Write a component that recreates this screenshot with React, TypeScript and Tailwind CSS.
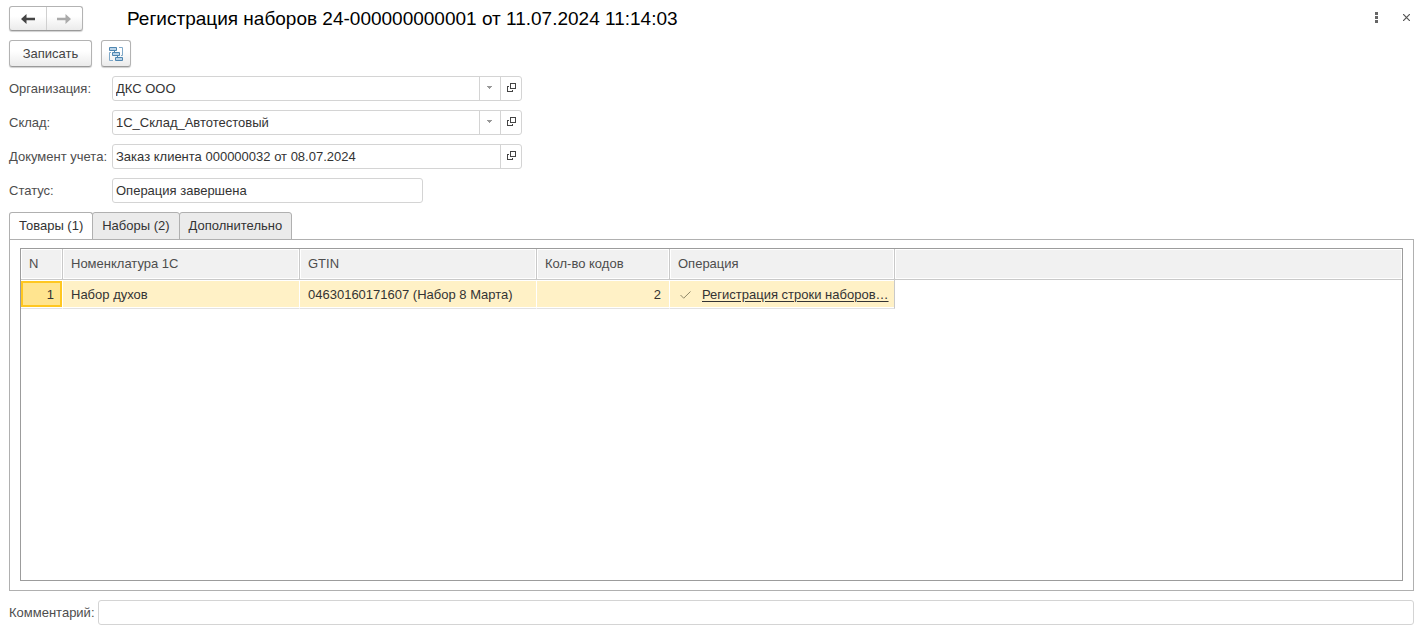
import { useState } from "react";
import type { ReactNode } from "react";

interface FieldProps {
  id: string;
  label: string;
  value: string;
  width: string;
  withList?: boolean;
  withOpen?: boolean;
}

interface TabItem {
  id: string;
  title: string;
}

const fields: FieldProps[] = [
  { id: "organization", label: "Организация:", value: "ДКС ООО", width: "w-[410px]", withList: true, withOpen: true },
  { id: "warehouse", label: "Склад:", value: "1С_Склад_Автотестовый", width: "w-[410px]", withList: true, withOpen: true },
  { id: "document", label: "Документ учета:", value: "Заказ клиента 000000032 от 08.07.2024", width: "w-[410px]", withOpen: true },
  { id: "status", label: "Статус:", value: "Операция завершена", width: "w-[311px]" },
];

const tabs: TabItem[] = [
  { id: "goods", title: "Товары (1)" },
  { id: "sets", title: "Наборы (2)" },
  { id: "extra", title: "Дополнительно" },
];

const columns = [
  { title: "N", width: "w-[42px]" },
  { title: "Номенклатура 1С", width: "w-[237px]" },
  { title: "GTIN", width: "w-[237px]" },
  { title: "Кол-во кодов", width: "w-[133px]" },
  { title: "Операция", width: "w-[225px]" },
];

const buttonStyle =
  "rounded-[3px] border border-[#b3b3b3] border-b-[#9a9a9a] bg-gradient-to-b from-white from-40% to-[#ebebeb] shadow-[0_1px_1px_#d0d0d0]";

const ArrowIcon = ({ className }: { className: string }) => (
  <svg className={className} width="14" height="10" viewBox="0 0 14 10" fill="currentColor" aria-hidden="true">
    <path d="M0 5 5.5 0v3.7H14v2.6H5.5V10z" />
  </svg>
);

const OpenIcon = () => (
  <svg width="9" height="9" viewBox="0 0 9 9" fill="none" stroke="#444" aria-hidden="true" shapeRendering="crispEdges">
    <path d="M3.5 .5h5v5h-5z" />
    <path d="M2 3.5H.5v5h5V7" />
  </svg>
);

const StructureIcon = () => (
  <svg width="14" height="14" viewBox="0 0 14 14" fill="none" stroke="#4f86b0" aria-hidden="true">
    <path d="M10 .5h3.5v8H12M4 13.5H.5v-8H2" stroke="#7fa8c8" />
    <path d="M5.5 4v1M8.5 9v1" />
    <g fill="#b9d3e8">
      <path d="M.5 .5h7v3h-7z" />
      <path d="M3.5 5.5h7v3h-7z" />
      <path d="M6.5 10.5h7v3h-7z" />
    </g>
  </svg>
);

const FieldButton = ({ title, children }: { title: string; children: ReactNode }) => (
  <button
    type="button"
    aria-label={title}
    className="flex w-[21px] shrink-0 items-center justify-center border-l border-[#d4d4d4] pb-0.5"
  >
    {children}
  </button>
);

const Field = ({ id, label, value, width, withList, withOpen }: FieldProps) => (
  <div className="flex items-center">
    <label htmlFor={id} className="w-[103px] shrink-0 whitespace-nowrap text-[#4d4d4d]">
      {label}
    </label>
    <div className={`flex h-[25px] rounded-[3px] border border-[#d4d4d4] bg-white ${width}`}>
      <input id={id} defaultValue={value} className="min-w-0 flex-1 px-[3px] outline-none" />
      {withList && (
        <FieldButton title="Выбрать">
          <svg width="6" height="3" viewBox="0 0 6 3" fill="#999" aria-hidden="true" shapeRendering="crispEdges">
            <path d="M0 0h5v1H4v1H3v1H2V2H1V1H0z" />
          </svg>
        </FieldButton>
      )}
      {withOpen && (
        <FieldButton title="Открыть">
          <OpenIcon />
        </FieldButton>
      )}
    </div>
  </div>
);

const Header = () => (
  <header className="flex h-[25px] items-center">
    <div className={`flex h-[25px] w-[74px] shrink-0 ${buttonStyle}`}>
      <button type="button" aria-label="Назад" className="flex flex-1 items-center justify-center border-r border-[#d0d0d0] text-[#444]">
        <ArrowIcon className="" />
      </button>
      <button type="button" aria-label="Вперед" className="flex flex-1 items-center justify-center text-[#aaa]">
        <ArrowIcon className="rotate-180" />
      </button>
    </div>
    <h1 className="ml-11 flex-1 whitespace-nowrap text-[19px] leading-6 text-black">
      Регистрация наборов 24-000000000001 от 11.07.2024 11:14:03
    </h1>
    <div className="flex items-center gap-[25px] pr-2 pb-0.5">
      <button type="button" aria-label="Еще">
        <svg width="3" height="11" viewBox="0 0 3 11" fill="#666" aria-hidden="true">
          <path d="M0 0h3v3H0zM0 4h3v3H0zM0 8h3v3H0z" />
        </svg>
      </button>
      <button type="button" aria-label="Закрыть">
        <svg width="7" height="7" viewBox="0 0 7 7" fill="none" stroke="#555" strokeWidth="1.2" aria-hidden="true">
          <path d="M0 0l7 7M7 0L0 7" />
        </svg>
      </button>
    </div>
  </header>
);

const GoodsTable = () => {
  const cell =
    "h-[29px] border-r border-b border-r-white border-b-[#e2e2e2] bg-[#fff1c6] px-2 pt-0.5 shadow-[inset_0_1px_0_white,inset_0_-1px_0_white]";

  return (
    <table className="w-full table-fixed border-separate border-spacing-0">
      <thead>
        <tr className="text-left text-[#4d4d4d]">
          {columns.map((column) => (
            <th
              key={column.title}
              className={`h-[31px] border-r border-b border-[#c9c9c9] bg-[#f1f1f1] px-2 font-normal shadow-[inset_0_0_0_1px_white] ${column.width}`}
            >
              {column.title}
            </th>
          ))}
          <td className="border-b border-[#c9c9c9] bg-[#f1f1f1] shadow-[inset_0_0_0_1px_white]" />
        </tr>
      </thead>
      <tbody>
        <tr>
          <td className="h-[29px] border-r border-b border-r-white border-b-[#e2e2e2] py-px">
            <div className="flex h-[26px] items-center justify-end border-2 border-[#ffc720] bg-[#ffe48f] pt-0.5 pr-[6px]">1</div>
          </td>
          <td className={cell}>Набор духов</td>
          <td className={cell}>04630160171607 (Набор 8 Марта)</td>
          <td className={`${cell} text-right`}>2</td>
          <td className="h-[29px] border-r border-b border-r-[#c9c9c9] border-b-[#e2e2e2] bg-[#fff1c6] px-2 pt-0.5 shadow-[inset_0_1px_0_white,inset_0_-1px_0_white]">
            <div className="flex items-center gap-[11px] pl-0.5">
              <svg className="shrink-0" width="11" height="8" viewBox="0 0 11 8" fill="none" stroke="#8f8868" aria-hidden="true">
                <path d="M.5 4l3.2 3.2L10.5 .5" />
              </svg>
              <a href="#operation" className="whitespace-nowrap underline underline-offset-2">
                Регистрация строки наборов…
              </a>
            </div>
          </td>
          <td />
        </tr>
      </tbody>
    </table>
  );
};

export default function App() {
  const [activeTab, setActiveTab] = useState("goods");

  return (
    <main className="flex min-h-screen flex-col bg-white px-[9px] pt-[6px] pb-[11px] font-['Liberation_Sans',Arial,sans-serif] text-[13px] leading-4 text-[#333]">
      <Header />

      <div className="mt-[9px] flex gap-[9px]">
        <button type="button" className={`h-[27px] w-[83px] text-[#444] ${buttonStyle}`}>
          Записать
        </button>
        <button type="button" aria-label="Структура подчиненности" className={`flex h-[27px] w-[30px] items-center justify-center ${buttonStyle}`}>
          <StructureIcon />
        </button>
      </div>

      <form className="mt-[9px] flex flex-col gap-[9px]">
        {fields.map((field) => (
          <Field key={field.id} {...field} />
        ))}
      </form>

      <div className="mt-[9px] mr-1 flex flex-1 flex-col">
        <div role="tablist" className="flex">
          {tabs.map((tab) => (
            <button
              key={tab.id}
              type="button"
              role="tab"
              aria-selected={activeTab === tab.id}
              onClick={() => setActiveTab(tab.id)}
              className={`-mb-px -ml-px h-7 rounded-t-[3px] border border-[#b0b0b0] px-[9px] first:ml-0 ${
                activeTab === tab.id ? "border-b-white bg-white" : "bg-[#ebebeb]"
              }`}
            >
              {tab.title}
            </button>
          ))}
        </div>
        <div role="tabpanel" className="flex flex-1 flex-col border border-[#b0b0b0] px-[10px] pt-2 pb-[9px]">
          <div className="flex-1 border border-[#9c9c9c]">
            {activeTab === "goods" && <GoodsTable />}
          </div>
        </div>
      </div>

      <div className="mt-[9px] mr-1 flex items-center gap-[3px]">
        <label htmlFor="comment" className="text-[#4d4d4d]">
          Комментарий:
        </label>
        <input id="comment" className="h-[25px] min-w-0 flex-1 rounded-[3px] border border-[#d4d4d4] px-[3px] outline-none" />
      </div>
    </main>
  );
}
